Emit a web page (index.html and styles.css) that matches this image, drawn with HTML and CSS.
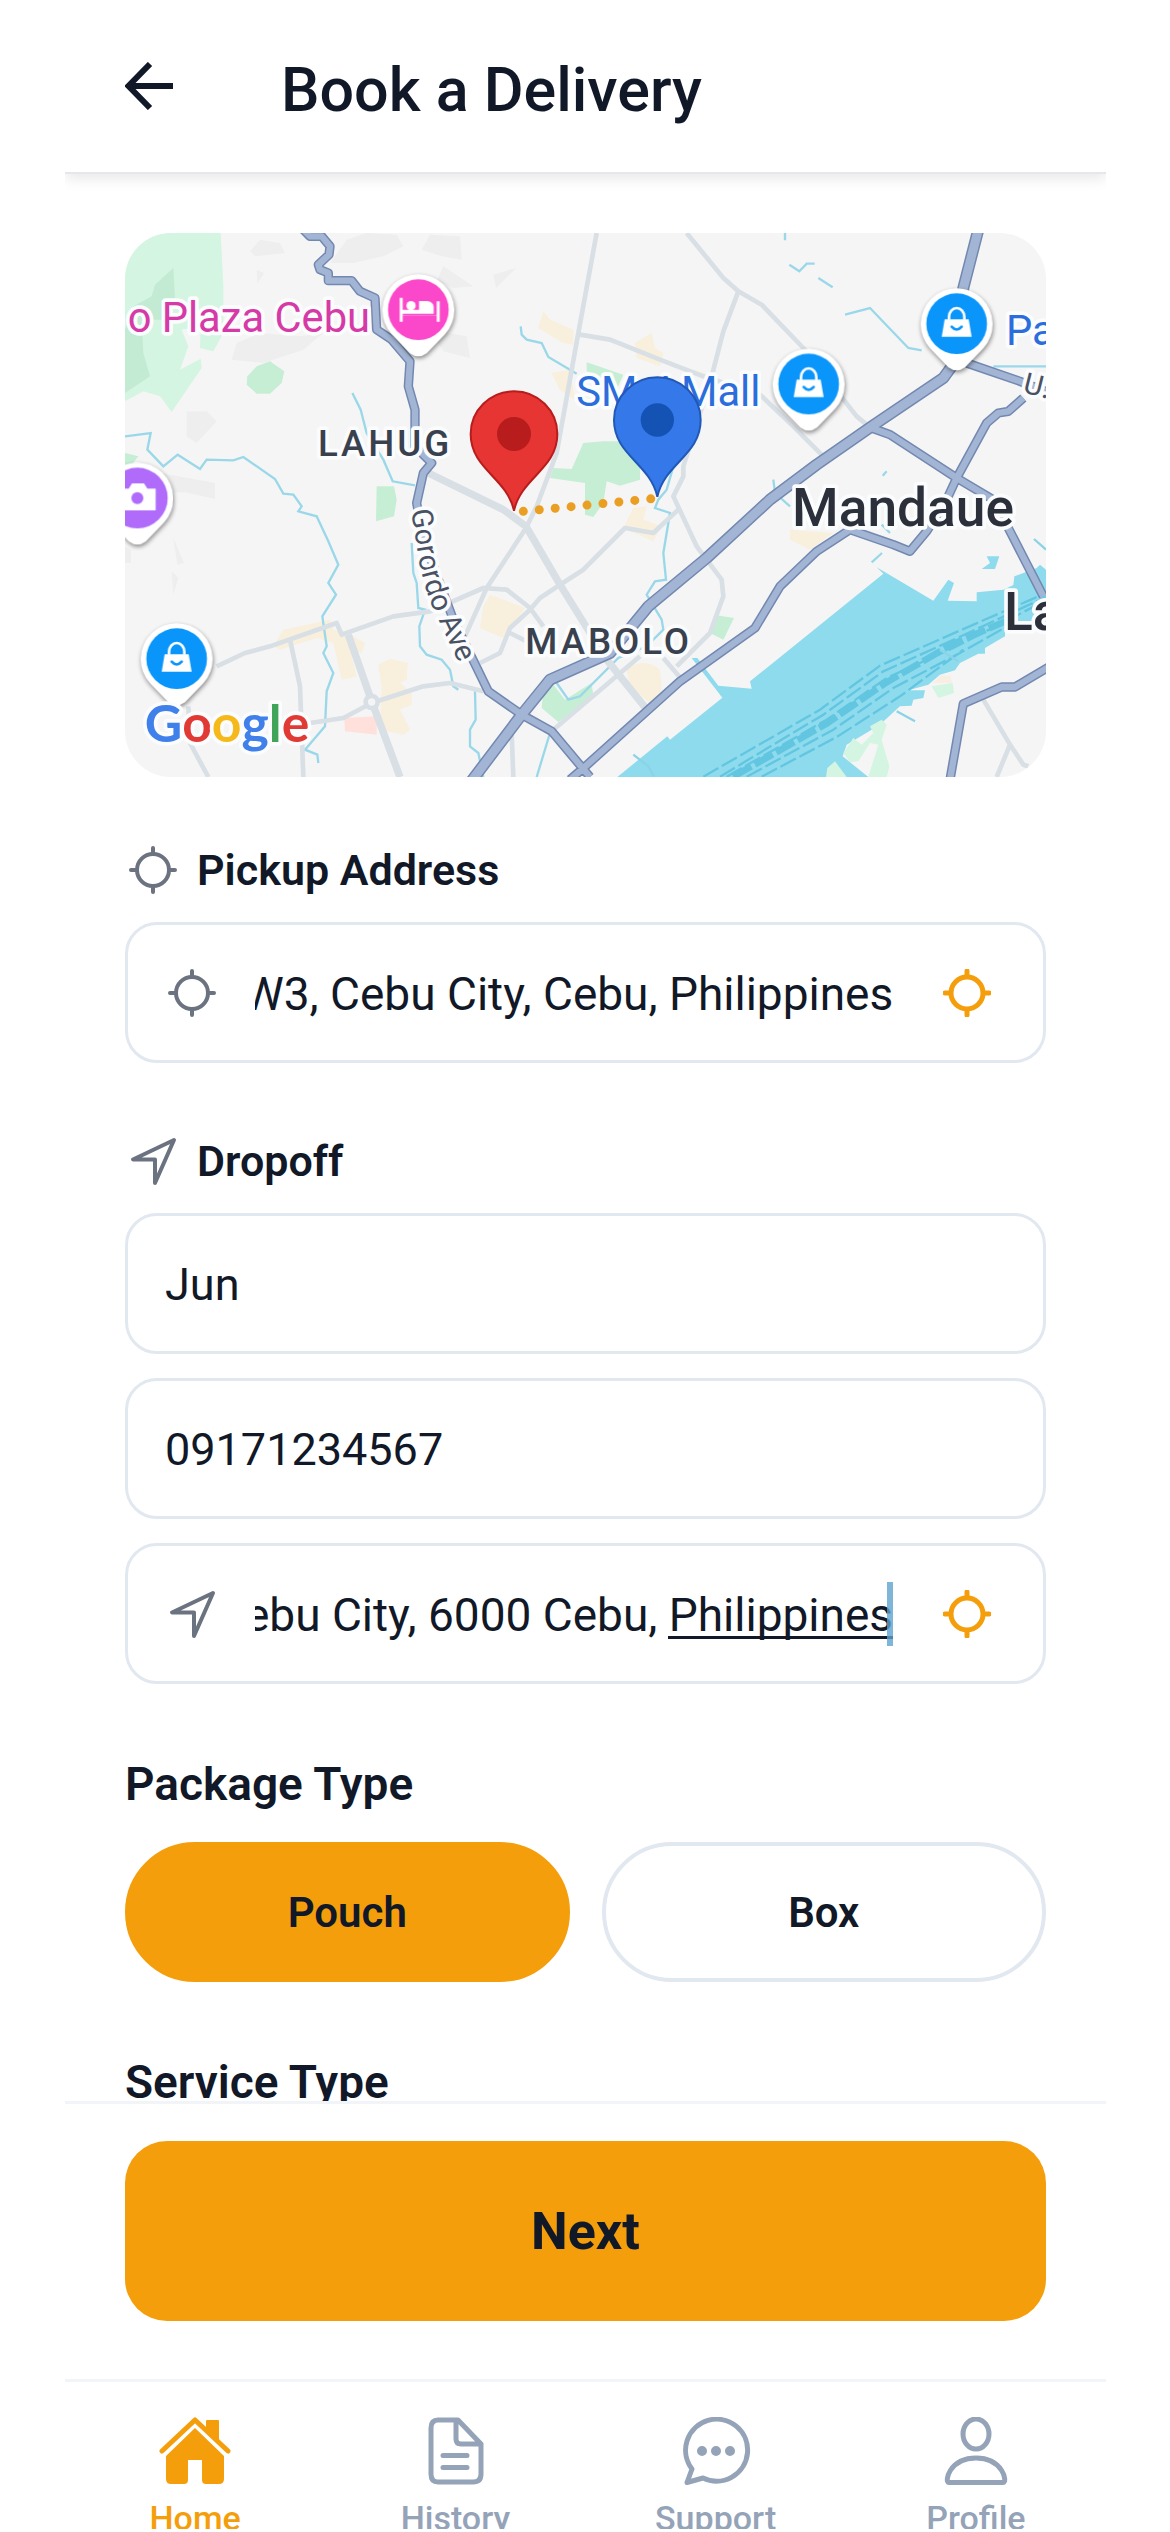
FILE: index.html
```html
<!DOCTYPE html>
<html lang="en">
<head>
    <meta charset="UTF-8">
    <meta name="viewport" content="width=device-width, initial-scale=1.0">
    <title>Book a Delivery</title>
    <link rel="stylesheet" href="styles.css">
</head>
<body>
    <!-- Shared icons -->
    <svg class="defs" aria-hidden="true">
        <symbol id="icon-locate" viewBox="0 0 48 48">
            <circle cx="24" cy="24" r="16"/>
            <path d="M24 2v5M24 41v5M2 24h5M41 24h5"/>
        </symbol>
        <symbol id="icon-send" viewBox="0 0 48 48">
            <path d="M45 3L4 22.500h22V46z"/>
        </symbol>
    </svg>

    <div class="app">
        <!-- Header with back arrow and title -->
        <header class="header">
            <a href="#" class="back" aria-label="Back">
                <svg viewBox="0 0 48 48"><path d="M25 2L3.500 24L25 46M3.500 24H48"/></svg>
            </a>
            <h1>Book a Delivery</h1>
        </header>

        <main class="content">
            <!-- Map -->
            <svg class="map" viewBox="45 40 2763 1632" preserveAspectRatio="xMidYMid slice" role="img" aria-label="Map of the route">
                <rect x="45" y="40" width="2763" height="1632" fill="#f5f5f5"/>
                <!-- terrain -->
                <g fill="#eeeeee">
                    <path d="M420 95l30-35 60 10 15 30-90 10zM660 130l50-70 60-20 90 5 20 35-60 30-90 20zM960 45l90 5 5 70-60-10-60-20zM440 150l22 10-20 32zM1000 140l90 60-60 5-50-20zM1150 165l68-20-60 60zM380 370l70-30 120 10 70-10-60 50-120 40-95-10zM230 575l60 0 30 30-60 65-30-20zM960 330l110 20 10 65-80-20zM150 760l165 30 0 48-90-20-60 0zM190 955l32 75-20 5zM185 1055l20 20-15 50zM45 980l18 10v40H45z"/>
                </g>
                <!-- parks -->
                <path fill="#d4f5e1" d="M45 40H332L340 200V340L310 395L270 385L272 320L215 330L235 380L210 450L272 417L275 445L185 577L150 530L100 515L45 545z"/>
                <path fill="#c3ead3" d="M190 145L195 240L160 300L95 300L100 400L120 470L45 520V330L70 260L125 230L135 195z"/>
                <g fill="#c5eed5">
                    <path d="M480 425L523 455L515 490L480 522H440L410 495L412 470L440 440z"/>
                    <path d="M800 800H852L860 840L852 890L798 905z"/>
                    <path d="M1320 775L1330 745L1385 748L1420 670L1480 665H1560L1590 720V780L1530 798L1490 785L1480 850L1450 892L1425 885V790z"/>
                    <path d="M1430 428L1540 465L1520 510L1430 455z"/>
                    <path d="M1820 1187L1872 1195L1840 1260L1800 1240z"/>
                    <path d="M1300 1410L1330 1395L1365 1440L1445 1390L1450 1430L1345 1507L1295 1465z"/>
                    <path d="M45 700l40 10-20 25H45z"/>
                </g>
                <!-- built-up blocks -->
                <g fill="#f8efdc">
                    <path d="M1300 275L1320 300L1390 330V375L1360 370L1285 325zM1325 460L1380 450L1395 540L1350 510zM1575 370L1625 340L1635 385L1660 400L1650 440L1580 415zM1750 450L1830 475L1790 490z"/>
                    <path d="M490 1280L520 1230L660 1200L670 1230L720 1245L765 1270L755 1300L720 1290L740 1370L695 1380L670 1270L620 1255L510 1290z"/>
                    <path d="M805 1335L840 1318L893 1330L890 1380L870 1390L905 1420V1455L870 1470L900 1530L880 1545L810 1530L815 1400z"/>
                    <path d="M1140 1125L1245 1165L1180 1255L1110 1225L1120 1160zM1570 865L1610 860L1600 900L1655 920L1630 965L1540 925zM1550 1350Q1600 1310 1650 1350L1655 1410L1620 1450L1560 1400zM2040 930L2170 940L2100 990L2040 960z"/>
                </g>
                <path fill="#ffe0db" d="M703 1495L800 1490V1545L705 1535z"/>
                <!-- sea -->
                <g transform="translate(1410 840)">
                    <path fill="#8fdbee" d="M112 832L262 710L270 720L427 594L335 475L352 475L415 558L515 567L510 545L910 222L890 203L1060 303L1105 240L1122 250L1103 303L1190 305V278L1270 270L1300 256L1303 230L1370 205L1380 195L1398 210V380L1275 390V410L1215 445V462H1195L1140 490L1125 512L1080 525L1045 555L985 572H1035L1030 595L1000 600L995 618L960 620L905 670L875 690L800 735L788 770L865 832zM1220 170H1258L1245 208H1205L1230 190z"/>
                    <g fill="none" stroke="#62c6e1" stroke-width="7" stroke-dasharray="52 12">
                        <path d="M370 831L720 630L900 498L1100 410L1398 280"/>
                        <path d="M420 831L730 645L910 515L1110 425L1398 292"/>
                        <path d="M440 831L740 660L920 535L1120 445L1398 302"/>
                        <path d="M500 831L760 690L940 565L1140 460L1300 370"/>
                        <path d="M545 831L770 712L960 590L1150 450"/>
                    </g>
                    <path fill="none" stroke="#62c6e1" stroke-width="20" stroke-dasharray="62 12" d="M460 831L740 672L920 548L1120 432L1300 355"/>
                    <path fill="none" stroke="#8bd3e6" stroke-width="7" d="M160 765L205 800L222 831M950 635L1005 665M1362 118L1398 150M1080 450L1135 485"/>
                    <path fill="#d4f5e1" d="M790 760L820 715L845 735L880 700L870 680L905 660L920 675L905 720L928 800L920 832H865L895 735L870 730L835 785L810 788zM738 832L742 805L765 785L800 832zM1055 560L1118 550L1122 580L1075 595z"/>
                    <path fill="#f8eee2" d="M1060 550L1080 528L1112 528L1115 550z"/>
                </g>
                <!-- streams -->
                <g class="stream">
                    <path d="M45 650L122 640L112 690L160 740L203 705L270 748L290 720L370 722L400 712L495 778L520 822L550 825L575 860L565 875L620 890L655 965L685 1035L655 1090L678 1125L637 1190L650 1280L640 1300L670 1360L650 1415L645 1520L585 1590L622 1605L625 1630"/>
                    <path d="M727 520L752 570L770 640L820 720L848 785L915 797M905 970L910 1060L920 1090L925 1165L945 1170L928 1220L930 1280L950 1305L995 1320L1020 1350L1030 1400L1045 1410M1232 320L1235 345L1250 360L1295 370L1315 412L1400 462M1095 1415L1097 1500L1080 1530V1580L1105 1600L1120 1672"/>
                    <path d="M1690 740L1670 810L1645 840L1635 865L1680 880L1665 970L1660 1000L1668 1080L1635 1085L1610 1125L1655 1200L1660 1230L1610 1280L1525 1315L1410 1430L1375 1440L1340 1390M1320 1540L1280 1672"/>
                    <path d="M2038 135L2068 155L2090 132H2114M2125 175L2168 203M2205 285L2280 265L2395 385L2435 392M2650 440H2808M1990 780L1995 820L2040 860M2316 1000L2285 1028M2315 915L2340 940M2025 40V62M2330 755L2318 768"/>
                </g>
                <!-- streets -->
                <g class="street">
                    <path d="M1460 40L1405 340L1340 700L1280 860L1248 925L1130 1105L1065 1250M1410 345L1500 360L1650 420L1780 470L1950 525L2050 620L2140 710M1730 40L1840 175L1885 215L1955 255L2080 385L2240 590L2270 615M1885 215L1840 335L1805 470L1720 740V770L1690 830L1760 980L1835 1080L1840 1130L1800 1240L1700 1340"/>
                    <path d="M1705 870L1630 940L1545 925L1420 1050L1350 1095L1290 1135L1260 1170L1200 1225L1170 1300L1110 1330M1200 1240L1250 1265M320 1340L405 1300L480 1280L680 1210L695 1245L850 1190L960 1175L1120 1105L1190 1110L1260 1165L1300 1220M540 1260L570 1400L580 1672M600 1510L700 1495L785 1450L940 1400L1020 1390L1120 1415M235 1460L240 1570L295 1672M1205 1540L1210 1672M1590 1310L1330 1530M1660 1315L1720 1385M2620 1440L2700 1575L2740 1635L2755 1640M2700 1575L2660 1672"/>
                    <path class="wide" d="M715 1245L785 1445L870 1672"/>
                    <path class="wide" d="M955 760L1180 870L1248 920L1350 1095L1490 1320L1615 1475"/>
                    <circle cx="785" cy="1447" r="18" fill="#f5f5f5"/>
                </g>
                <!-- main roads, outline first -->
                <g class="road">
                    <path id="road-thin" d="M580 30L600 50H635L660 80L657 105L625 135L630 150L655 160V183H725L750 215L795 235L800 330L845 360L900 425L895 500L915 570V680L965 730L940 760L920 850L940 960L1030 1200L1135 1415L1235 1485L1325 1535L1440 1672M2285 625L2340 645L2540 775L2650 840L2700 935L2800 1130M2740 535L2695 575L2665 580L2630 610L2540 775L2510 840L2450 935L2400 995L2350 975L2220 930L2120 995L2010 1100L1935 1225L1710 1385L1415 1650L1380 1680M2570 430L2730 485L2820 520M2820 1340L2715 1402H2675L2560 1452L2520 1680"/>
                    <path id="road-wide" d="M1080 1690L1235 1485L1320 1380L1500 1300L1615 1160L1790 1015L1980 840L2120 735L2285 620L2500 475L2540 420L2560 205L2605 30"/>
                </g>
                <g class="road road-fill">
                    <use href="#road-thin"/>
                    <use href="#road-wide"/>
                </g>
                <path id="gorordo" fill="none" d="M903 872L930 1040Q950 1130 985 1200L1070 1380"/>
                <!-- names -->
                <g class="names">
                    <text class="place pink" x="780" y="337" text-anchor="end">o Plaza Cebu</text>
                    <text class="place" x="1399" y="558">SM J Mall</text>
                    <text class="place" x="2688" y="377">Pa</text>
                    <text class="district" x="624" y="708">LAHUG</text>
                    <text class="district" x="1246" y="1302">MABOLO</text>
                    <text class="city" x="2046" y="920">Mandaue</text>
                    <text class="city" x="2682" y="1230">La</text>
                    <text class="way"><textPath href="#gorordo">Gorordo Ave</textPath></text>
                    <text class="way" x="2736" y="518" transform="rotate(14 2736 518)">U.N</text>
                </g>
                <!-- places of interest -->
                <g class="poi">
                    <g transform="translate(925 270)">
                        <path d="M-25 131L-80 74A108 108 0 1 1 80 74L25 131Q0 149 -25 131z"/>
                        <circle r="91" fill="#fb47c9"/>
                        <path d="M-56-36h9v48h93v-22q-2-14-20-16h-24v26h-49v18h93v0h9v-43h9v61h-9v-17h-102v17h-9z"/>
                        <circle cx="-22" cy="-12" r="14"/>
                    </g>
                    <g transform="translate(82 835)">
                        <path d="M-25 131L-80 74A108 108 0 1 1 80 74L25 131Q0 149 -25 131z"/>
                        <circle r="91" fill="#b06bfb"/>
                        <path d="M-54-28h28l10-16h36l10 16h25v65h-109z"/>
                        <circle r="18" fill="#b06bfb"/>
                    </g>
                    <g id="shop" transform="translate(2540 312)">
                        <path d="M-25 131L-80 74A108 108 0 1 1 80 74L25 131Q0 149 -25 131z"/>
                        <circle r="91" fill="#0a95fb"/>
                        <path d="M-36-13h72l9 52h-90z"/>
                        <path class="handle" d="M-23-12v-9a23 26 0 0 1 46 0v9"/>
                        <path class="smile" d="M-15 9q15 17 30 0"/>
                    </g>
                    <use href="#shop" x="-444" y="181"/>
                    <use href="#shop" x="-2340" y="1005"/>
                </g>
                <!-- route -->
                <path class="route" d="M1240 875L1628 837"/>
                <g transform="translate(1212 643)">
                    <path fill="#e63533" stroke="#b81c1c" stroke-width="6" d="M0 230C-22 130-130 105-130 0A130 128 0 0 1 130 0C130 105 22 130 0 230z"/>
                    <circle r="51" fill="#b81c1c"/>
                </g>
                <g transform="translate(1642 601)">
                    <path fill="#3478ea" stroke="#2158b6" stroke-width="6" d="M0 230C-22 130-130 105-130 0A130 128 0 0 1 130 0C130 105 22 130 0 230z"/>
                    <circle r="50" fill="#1453b4"/>
                </g>
                <text class="google" x="104" y="1566"><tspan fill="#3f80ea">G</tspan><tspan fill="#e13a34">o</tspan><tspan fill="#f6b91c">o</tspan><tspan fill="#3f80ea">g</tspan><tspan fill="#40a559">l</tspan><tspan fill="#e13a34">e</tspan></text>
            </svg>

            <!-- Pickup -->
            <section class="group">
                <label class="group-label" for="pickup">
                    <svg class="icon"><use href="#icon-locate"/></svg>
                    Pickup Address
                </label>
                <div class="field with-icon">
                    <svg class="icon"><use href="#icon-locate"/></svg>
                    <div class="field-text">
                        <input type="text" id="pickup" class="address" value="8V7W+W3, Cebu City, Cebu, Philippines">
                    </div>
                    <button type="button" class="locate" aria-label="Use my location for pickup">
                        <svg class="icon"><use href="#icon-locate"/></svg>
                    </button>
                </div>
            </section>

            <!-- Dropoff -->
            <section class="group">
                <label class="group-label" for="dropoff">
                    <svg class="icon"><use href="#icon-send"/></svg>
                    Dropoff
                </label>
                <div class="fields">
                    <input type="text" class="field" aria-label="Recipient name" value="Jun">
                    <input type="tel" class="field" aria-label="Recipient phone" value="09171234567">
                    <div class="field with-icon">
                        <svg class="icon"><use href="#icon-send"/></svg>
                        <div class="field-text composing">
                            <input type="text" id="dropoff" class="address" value="Cebu City, 6000 Cebu, Philippines">
                        </div>
                        <button type="button" class="locate" aria-label="Use my location for dropoff">
                            <svg class="icon"><use href="#icon-locate"/></svg>
                        </button>
                    </div>
                </div>
            </section>

            <!-- Package type -->
            <section class="group">
                <h2>Package Type</h2>
                <div class="options">
                    <button type="button" class="option active" aria-pressed="true">Pouch</button>
                    <button type="button" class="option" aria-pressed="false">Box</button>
                </div>
            </section>

            <section class="group">
                <h2>Service Type</h2>
            </section>
        </main>

        <div class="actions">
            <button type="button" class="next">Next</button>
        </div>

        <!-- Bottom navigation -->
        <nav class="tabs">
            <a href="#" class="active">
                <svg viewBox="0 0 72 68">
                    <path d="M36 11L7 39v23q0 5 5 5h13q4 0 4-4V43h14v20q0 4 4 4h13q5 0 5-5V39z" fill="currentColor"/>
                    <path d="M3 34L36 3l33 31" fill="none" stroke="#fff" stroke-width="9"/>
                    <path d="M48 4h11v20l-11-10z" fill="currentColor" stroke="currentColor" stroke-width="2" stroke-linejoin="round"/>
                    <path d="M3 34L36 3l33 31" fill="none" stroke="currentColor" stroke-width="5" stroke-linecap="round" stroke-linejoin="round"/>
                </svg>
                Home
            </a>
            <a href="#">
                <svg class="line" viewBox="0 0 72 68">
                    <path d="M19 3h20l23 24v30q0 8-8 8H19q-7 0-7-8V11q0-8 7-8zM37 3v19q0 5 5 5h20M24 38.500h24M24 50.500h24"/>
                </svg>
                History
            </a>
            <a href="#">
                <svg class="line" viewBox="0 0 72 68">
                    <path d="M12 52A31 31 0 1 1 23 61L7 65.500z"/>
                    <path class="dots" d="M22 34h0M36 34h0M50 34h0"/>
                </svg>
                Support
            </a>
            <a href="#">
                <svg class="line" viewBox="0 0 72 68">
                    <ellipse cx="36" cy="17" rx="13" ry="15"/>
                    <path d="M9 65.500C4 65.500 9 41 36 41S68 65.500 63 65.500z"/>
                </svg>
                Profile
            </a>
        </nav>
    </div>

    <script>
        // Show the end of a long address instead of its start
        document.querySelectorAll('.address').forEach(input => {
            input.scrollLeft = input.scrollWidth;
        });
    </script>
</body>
</html>
```
FILE: styles.css
```css
* {
    box-sizing: border-box;
}
body {
    margin: 0;
    background-color: #fff;
    font-family: Roboto, Arial, sans-serif;
    color: #111827;
}
button, input {
    font-family: inherit;
    color: inherit;
}
.defs {
    position: absolute;
    width: 0;
    height: 0;
}
.app {
    display: flex;
    flex-direction: column;
    height: calc(100vh - 3px);
    margin: 0 64px 0 65px;
    overflow: hidden;
}

/* Header */
.header {
    display: flex;
    flex: none;
    align-items: center;
    gap: 108px;
    padding: 46px 60px;
    border-bottom: 2px solid #e5e7eb;
    box-shadow: 0 4px 14px rgba(0, 0, 0, 0.1);
}
.back {
    display: flex;
    color: inherit;
}
.back svg {
    width: 48px;
    height: 48px;
    fill: none;
    stroke: currentColor;
    stroke-width: 6;
}
h1 {
    margin: 0;
    padding-top: 8px;
    font-size: 61px;
    line-height: 72px;
    font-weight: 500;
}

/* Content */
.content {
    flex: 1;
    min-height: 0;
    overflow: hidden;
    padding: 59px 60px 0;
}
.map {
    display: block;
    width: 100%;
    aspect-ratio: 921 / 544;
    border-radius: 46px;
}
.group {
    margin-top: 72px;
}
.map + .group {
    margin-top: 67px;
}
.group-label {
    display: flex;
    align-items: center;
    gap: 20px;
    margin: 0 0 26px 4px;
    font-size: 43px;
    line-height: 52px;
    font-weight: 600;
}
.icon {
    flex: none;
    display: block;
    width: 48px;
    height: 48px;
    fill: none;
    stroke: #6b7280;
    stroke-width: 4;
    stroke-linecap: round;
    stroke-linejoin: round;
}
.fields {
    display: grid;
    gap: 24px;
}
.field {
    display: flex;
    align-items: center;
    width: 100%;
    height: 141px;
    padding: 2px 37px 0;
    border: 3px solid #e2e8f0;
    border-radius: 32px;
    background-color: #fff;
    font-size: 45px;
}
.with-icon {
    padding: 0 52px 0 40px;
}
.field-text {
    position: relative;
    flex: 1;
    min-width: 0;
    margin: 0 50px 0 39px;
}
.address {
    display: block;
    width: 100%;
    height: 64px;
    padding: 2px 0 0;
    border: none;
    background: none;
    font-size: 46px;
}
/* Word being typed: underline and caret */
.composing::before {
    content: "";
    position: absolute;
    right: 0;
    bottom: 7px;
    width: 225px;
    height: 3px;
    background-color: #111827;
}
.composing::after {
    content: "";
    position: absolute;
    right: 0;
    top: 0;
    width: 6px;
    height: 64px;
    background-color: #5fa3d0;
    opacity: 0.8;
}
.locate {
    padding: 0;
    border: none;
    background: none;
}
.locate .icon {
    stroke: #f59e0b;
    stroke-width: 5;
}
h2 {
    margin: 0 0 30px;
    font-size: 46px;
    line-height: 56px;
    font-weight: 600;
}
.options {
    display: flex;
    gap: 32px;
}
.option {
    flex: 1;
    height: 140px;
    border: 4px solid #e2e8f0;
    border-radius: 70px;
    background-color: #fff;
    font-size: 42px;
    font-weight: 600;
}
.option.active {
    border-color: #f59e0b;
    background-color: #f59e0b;
}

/* Bottom bar */
.actions {
    flex: none;
    padding: 37px 60px 58px;
    border-top: 3px solid #f1f5f9;
    background-color: #fff;
}
.next {
    display: block;
    width: 100%;
    height: 180px;
    border: none;
    border-radius: 42px;
    background-color: #f59e0b;
    font-size: 52px;
    font-weight: 700;
}
.tabs {
    display: flex;
    flex: none;
    height: 150px;
    padding-top: 35px;
    border-top: 3px solid #f1f5f9;
    overflow: hidden;
}
.tabs a {
    display: flex;
    flex: 1;
    flex-direction: column;
    align-items: center;
    gap: 13px;
    font-size: 34px;
    line-height: 40px;
    font-weight: 500;
    color: #94a3b8;
    text-decoration: none;
}
.tabs a.active {
    color: #f59e0b;
}
.tabs svg {
    flex: none;
    width: 72px;
    height: 68px;
}
.tabs .line {
    fill: none;
    stroke: currentColor;
    stroke-width: 5;
    stroke-linecap: round;
    stroke-linejoin: round;
}
.tabs .dots {
    stroke-width: 10;
}

/* Map drawing */
.stream {
    fill: none;
    stroke: #9ad8e9;
    stroke-width: 7;
}
.street {
    fill: none;
    stroke: #d8dfe5;
    stroke-width: 14;
    stroke-linejoin: round;
}
.street .wide {
    stroke-width: 22;
}
.road {
    --thin: 28px;
    --wide: 36px;
    fill: none;
    stroke: #7388b0;
    stroke-linejoin: round;
}
.road-fill {
    --thin: 19px;
    --wide: 27px;
    stroke: #a3b5d4;
}
#road-thin {
    stroke-width: var(--thin);
}
#road-wide {
    stroke-width: var(--wide);
}
.names text, .google {
    paint-order: stroke;
    stroke: #fbfcfd;
    stroke-width: 22px;
    stroke-linejoin: round;
}
.place {
    font-size: 125px;
    fill: #2a6ddb;
}
.pink {
    fill: #d53aa6;
}
.district {
    font-size: 110px;
    font-weight: 500;
    letter-spacing: 0.08em;
    fill: #3a414e;
}
.city {
    font-size: 160px;
    font-weight: 500;
    fill: #2b303b;
}
.way {
    font-size: 88px;
    fill: #4a5162;
}
.poi {
    fill: #fff;
    filter: drop-shadow(2px 6px 6px rgba(0, 0, 0, 0.45));
}
.poi .handle {
    fill: none;
    stroke: #fff;
    stroke-width: 8;
}
.poi .smile {
    fill: none;
    stroke: #0a95fb;
    stroke-width: 8;
    stroke-linecap: round;
}
.route {
    fill: none;
    stroke: #eb9f22;
    stroke-width: 27;
    stroke-linecap: round;
    stroke-dasharray: 0 48;
}
.google {
    font-family: Lato, sans-serif;
    font-size: 155px;
    font-weight: 700;
}
```
